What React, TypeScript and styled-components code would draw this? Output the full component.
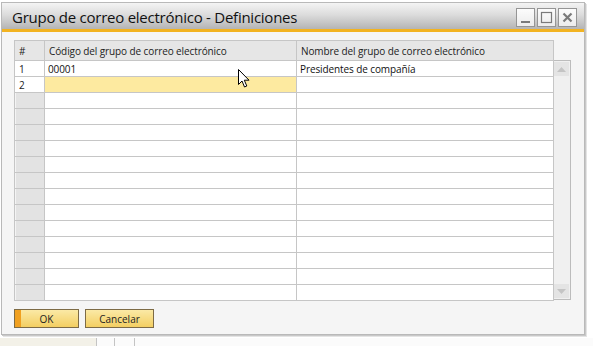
import React from "react";
import styled, { createGlobalStyle } from "styled-components";

const Global = createGlobalStyle`
  html, body { margin: 0; padding: 0; background: #ffffff; }
  body { width: 593px; height: 346px; overflow: hidden; font-family: "Open Sans", "Noto Sans", sans-serif; }
`;

const Page = styled.div`
  display: flex;
  flex-direction: column;
  width: 593px;
  height: 346px;
`;

const Window = styled.div`
  margin: 2px 0 0 1px;
  width: 584px;
  height: 333px;
  box-sizing: border-box;
  border: 1px solid #b9b9b9;
  box-shadow: 1px 1px 0 #c8c8c8, 2px 2px 0 #e4e4e4;
  background: #f5f5f5;
  display: flex;
  flex-direction: column;
`;

const TitleBar = styled.div`
  height: 26px;
  flex: none;
  display: flex;
  align-items: center;
  justify-content: space-between;
  padding: 0 7px 0 10px;
  background: linear-gradient(#f4f4f4 0%, #dcdcdc 45%, #b4b4b4 100%);
  border-bottom: 3px solid #f2b321;
`;

const Title = styled.div`
  font-size: 15px;
  letter-spacing: -0.25px;
  color: #111;
  padding-top: 2px;
`;

const Controls = styled.div`
  display: flex;
  gap: 2px;
  padding-top: 2px;
`;

const Ctrl = styled.div`
  width: 19px;
  height: 19px;
  box-sizing: border-box;
  border: 1px solid #959595;
  background: linear-gradient(#fcfcfc, #ececec);
  display: flex;
  align-items: center;
  justify-content: center;
`;

const Body = styled.div`
  flex: 1;
  display: flex;
  flex-direction: column;
  padding: 8px 0 0 12px;
`;

const GridWrap = styled.div`
  display: flex;
  width: 557px;
`;

const Table = styled.div`
  display: grid;
  grid-template-columns: 30px 252px 257px;
  grid-auto-rows: 16px;
  grid-template-rows: 20px;
  border-left: 1px solid #c6c6c6;
  border-top: 1px solid #c6c6c6;
  width: 539px;
`;

const textCss = `
  font-size: 10px;
  letter-spacing: -0.1px;
  display: flex;
  align-items: center;
  white-space: nowrap;
  overflow: hidden;
  box-sizing: border-box;
  border-right: 1px solid #c6c6c6;
  border-bottom: 1px solid #c6c6c6;
`;

const Head = styled.div`
  ${textCss}
  background: #e6e6e6;
  color: #222;
  padding-left: 4px;
`;

const NumCell = styled.div<{ $active?: boolean }>`
  ${textCss}
  background: ${(p) => (p.$active ? "#ffffff" : "linear-gradient(90deg, #f4f4f4 0 1px, #e3e3e3 1px)")};
  color: #222;
  padding-left: 4px;
`;

const Cell = styled.div<{ $sel?: boolean }>`
  ${textCss}
  background: ${(p) => (p.$sel ? "#fdeaa0" : "#ffffff")};
  color: #111;
  padding-left: 3px;
`;

const ScrollBar = styled.div`
  margin-top: 20px;
  width: 17px;
  height: 240px;
  box-sizing: border-box;
  border: 1px solid #bcbcbc;
  border-left: none;
  background: #f0f0f0;
  display: flex;
  flex-direction: column;
  justify-content: space-between;
  padding: 1px 0 1px 0;
`;

const ScrollBtn = styled.div`
  width: 15px;
  height: 14px;
  background: #e4e4e4;
  display: flex;
  align-items: center;
  justify-content: center;
`;

const Buttons = styled.div`
  display: flex;
  gap: 6px;
  margin-top: 8px;
`;

const Btn = styled.div<{ $w: number; $primary?: boolean }>`
  width: ${(p) => p.$w}px;
  height: 19px;
  box-sizing: border-box;
  border: 1px solid #7d6b45;
  background: ${(p) =>
    p.$primary
      ? "linear-gradient(90deg, #f0a020 0 6px, transparent 6px), linear-gradient(#fbe9a6, #f3cf62)"
      : "linear-gradient(#fbe9a6, #f3cf62)"};
  font-size: 10px;
  color: #222;
  display: flex;
  align-items: center;
  justify-content: center;
`;

const Footer = styled.div`
  flex: 1;
  margin-top: 3px;
  display: flex;
`;

const FooterSeg = styled.div<{ $w: number; $bg: string; $line?: boolean }>`
  width: ${(p) => p.$w}px;
  background: ${(p) => p.$bg};
  border-right: ${(p) => (p.$line ? "1px solid #c4c4c4" : "none")};
`;

const FooterRest = styled.div`
  flex: 1;
  background: #fbfbfb;
`;

const Cursor = styled.svg`
  position: absolute;
  left: 238px;
  top: 69px;
`;

const ROWS = 15;

export default function App() {
  const rows = [];
  for (let i = 0; i < ROWS; i++) {
    const n = i + 1;
    rows.push(
      <React.Fragment key={i}>
        <NumCell $active={n <= 2}>{n <= 2 ? n : ""}</NumCell>
        <Cell $sel={n === 2}>{n === 1 ? "00001" : ""}</Cell>
        <Cell>{n === 1 ? "Presidentes de compañía" : ""}</Cell>
      </React.Fragment>
    );
  }
  return (
    <>
      <Global />
      <Page>
        <Window>
          <TitleBar>
            <Title>Grupo de correo electrónico - Definiciones</Title>
            <Controls>
              <Ctrl>
                <svg width="13" height="13" viewBox="0 0 13 13"><rect x="2" y="10" width="9" height="2" fill="#7a7a7a" /></svg>
              </Ctrl>
              <Ctrl>
                <svg width="13" height="13" viewBox="0 0 13 13"><rect x="1.5" y="1.5" width="10" height="10" fill="none" stroke="#7a7a7a" strokeWidth="1.2" /></svg>
              </Ctrl>
              <Ctrl>
                <svg width="13" height="13" viewBox="0 0 13 13"><path d="M2.5 2.5 L10.5 10.5 M10.5 2.5 L2.5 10.5" stroke="#7a7a7a" strokeWidth="2.2" /></svg>
              </Ctrl>
            </Controls>
          </TitleBar>
          <Body>
            <GridWrap>
              <Table>
                <Head>#</Head>
                <Head>Código del grupo de correo electrónico</Head>
                <Head>Nombre del grupo de correo electrónico</Head>
                {rows}
              </Table>
              <ScrollBar>
                <ScrollBtn>
                  <svg width="9" height="5" viewBox="0 0 9 5"><path d="M0 5 L4.5 0 L9 5 Z" fill="#c4c4c4" /></svg>
                </ScrollBtn>
                <ScrollBtn>
                  <svg width="9" height="5" viewBox="0 0 9 5"><path d="M0 0 L4.5 5 L9 0 Z" fill="#c4c4c4" /></svg>
                </ScrollBtn>
              </ScrollBar>
            </GridWrap>
            <Buttons>
              <Btn $w={65} $primary>OK</Btn>
              <Btn $w={69}>Cancelar</Btn>
            </Buttons>
          </Body>
        </Window>
        <Footer>
          <FooterSeg $w={96} $bg="#f3f1e8" $line />
          <FooterSeg $w={17} $bg="#fbfbfb" $line />
          <FooterSeg $w={19} $bg="#fbfbfb" $line />
          <FooterRest />
        </Footer>
        <Cursor width="13" height="20" viewBox="0 0 13 20">
          <path d="M0.5 0.5 L0.5 15.5 L4 12 L6.5 18 L8.8 17 L6.3 11.2 L11 11.2 Z" fill="#ffffff" stroke="#000" strokeWidth="1" strokeLinejoin="miter" />
        </Cursor>
      </Page>
    </>
  );
}
